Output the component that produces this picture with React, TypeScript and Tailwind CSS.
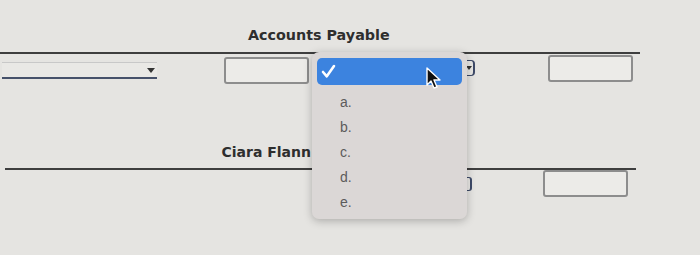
import React from 'react';

const options = ['a.', 'b.', 'c.', 'd.', 'e.'];

const TextBox: React.FC<{ className?: string }> = ({ className = '' }) => (
  <div className={`h-[27px] w-[85px] rounded-[3px] border-2 border-[#8d8d8d] bg-[#ecebe8] ${className}`} />
);

export default function App() {
  return (
    <div
      className="relative h-[255px] w-[700px] overflow-hidden bg-[#e5e4e1]"
      style={{ fontFamily: '"DejaVu Sans", Verdana, sans-serif' }}
    >
      {/* Header */}
      <div className="pl-[248px] pt-[25px] text-[14.3px] font-bold leading-[20px] text-[#2e2e2e]">
        Accounts Payable
      </div>
      <div className="mt-[7px] h-[2px] w-[640px] bg-[#3e3e3e]" />

      {/* Row 1 */}
      <div className="flex h-[89px] items-start">
        <div className="relative ml-[2px] mt-[8px] h-[17px] w-[155px] border-t border-[#c8c8c8] border-b-2 border-b-[#46516a] bg-[#e9e8e5]">
          <span className="absolute right-[2px] top-[5px] h-0 w-0 border-x-[4px] border-t-[5px] border-x-transparent border-t-[#333]" />
        </div>
        <TextBox className="ml-[67px] mt-[3px]" />
        <div className="relative ml-[156px] mt-[6px] h-[16px] w-[10px] rounded-r-[4px] border-y border-r-2 border-[#3e4a68] bg-[#e9e8e5]">
          <span className="absolute right-[1px] top-[5px] h-0 w-0 border-x-[3px] border-t-[4px] border-x-transparent border-t-[#333]" />
        </div>
        <TextBox className="ml-[73px] mt-[1px]" />
      </div>

      {/* Row 2 */}
      <div className="w-[311px] text-right text-[14px] font-bold leading-[18px] text-[#2e2e2e]">Ciara Flann</div>
      <div className="mt-[7px] ml-[5px] h-[2px] w-[631px] bg-[#3e3e3e]" />
      <div className="flex items-start">
        <div className="ml-[465px] mt-[7px] h-[14px] w-[7px] rounded-r-[3px] border-y border-r-2 border-[#3e4a68] bg-[#e9e8e5]" />
        <TextBox className="ml-[71px] mt-[0px]" />
      </div>

      {/* Open dropdown */}
      <div className="absolute left-[312px] top-[52px] h-[167px] w-[155px] rounded-[7px] bg-[#dbd7d6] shadow-[0_2px_8px_rgba(0,0,0,0.25)]">
        <div className="mx-[5px] mt-[6px] flex h-[27px] items-center rounded-[5px] bg-[#3c83df] pl-[4px]">
          <svg width="15" height="15" viewBox="0 0 15 15" fill="none">
            <path d="M2 8 L5.8 12.3 L13 2" stroke="white" strokeWidth="2.6" strokeLinecap="round" strokeLinejoin="round" />
          </svg>
        </div>
        <div className="mt-[5px] flex flex-col" style={{ fontFamily: '"Liberation Sans", Arial, sans-serif' }}>
          {options.map((o) => (
            <div key={o} className="h-[25px] pl-[28px] text-[14px] leading-[25px] text-[#5b5b5b]">
              {o}
            </div>
          ))}
        </div>
      </div>

      {/* Mouse cursor */}
      <svg className="absolute left-[426px] top-[67px]" width="16" height="24" viewBox="0 0 16 24">
        <path d="M1 1 L1 18 L5 14 L8 21 L11 20 L8 13 L14 13 Z" fill="#111" stroke="white" strokeWidth="1.4" strokeLinejoin="round" />
      </svg>
    </div>
  );
}
